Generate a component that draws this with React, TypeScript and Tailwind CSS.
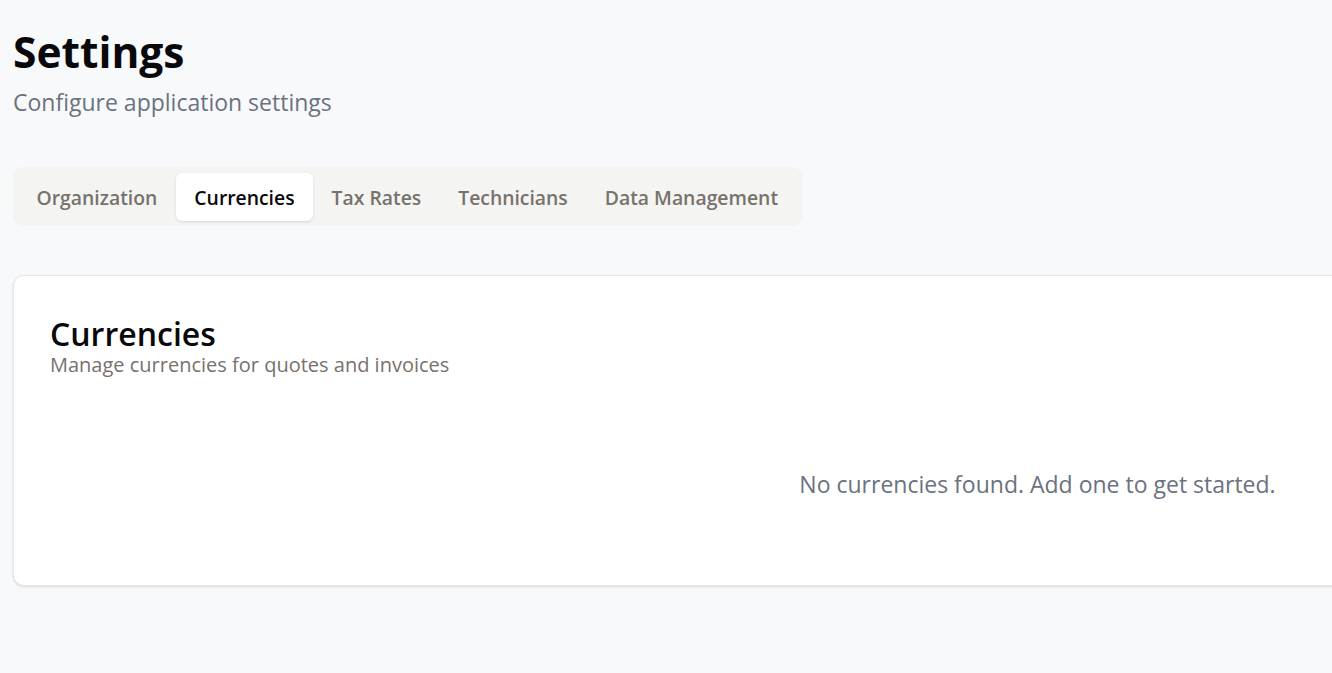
import { useState } from "react";

const tabs = ["Organization", "Currencies", "Tax Rates", "Technicians", "Data Management"];

export default function App() {
  const [active, setActive] = useState("Currencies");

  return (
    <div className="min-h-[673px] w-[1332px] overflow-hidden bg-[#f8f9fa] font-['Open_Sans',sans-serif]">
      <div className="w-[2100px] pl-[13px] pt-[27px]">
        <h1 className="text-[42.5px] font-bold leading-[50px] text-[#09090b]">Settings</h1>
        <p className="mt-[10px] text-[23px] leading-[30px] text-[#6b7280]">Configure application settings</p>

        <div className="mt-[50px] inline-flex h-[59px] items-center rounded-[9px] bg-[#f4f4f2] px-[5px]">
          {tabs.map((t) => (
            <button
              key={t}
              onClick={() => setActive(t)}
              className={
                t === active
                  ? "h-[48px] rounded-[6px] bg-white px-[18.5px] pt-[3px] text-[19.35px] font-semibold text-[#09090b] shadow-sm"
                  : "h-[48px] rounded-[6px] px-[18.5px] pt-[3px] text-[19.35px] font-semibold text-[#78716c]"
              }
            >
              {t}
            </button>
          ))}
        </div>

        {/* card runs past the right edge of the window */}
        <div className="mt-[49px] w-[2049px] rounded-[11px] border border-[#e5e7eb] bg-white shadow-sm">
          <div className="px-[36px] pt-[39px]">
            <h2 className="text-[32px] font-semibold leading-[38px] text-[#09090b]">Currencies</h2>
            <p className="text-[20px] leading-[24px] text-[#78716c]">Manage currencies for quotes and invoices</p>
          </div>
          <div className="px-[36px] pb-[85px] pt-[91px]">
            <p className="text-center text-[23px] leading-[32px] text-[#6b7280]">
              No currencies found. Add one to get started.
            </p>
          </div>
        </div>
      </div>
    </div>
  );
}
